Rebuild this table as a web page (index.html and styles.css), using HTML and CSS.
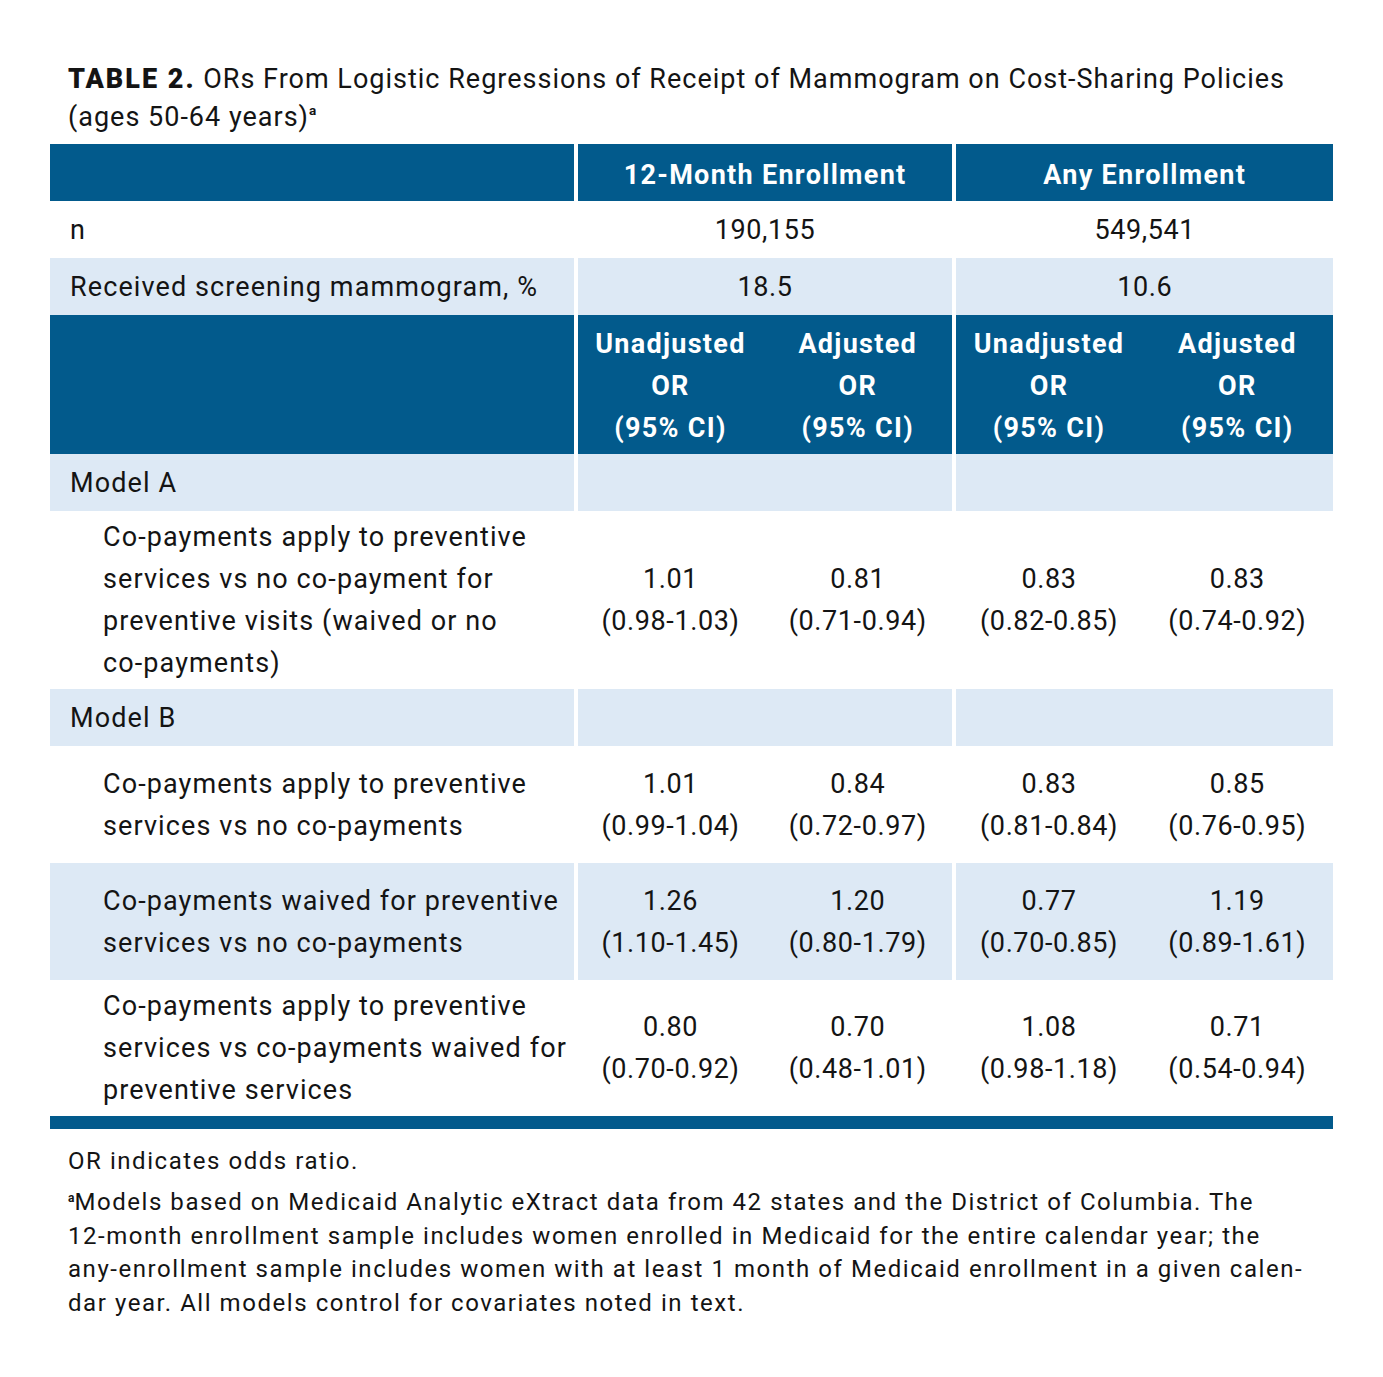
FILE: index.html
```html
<!DOCTYPE html>
<html>
<head>
<meta charset="utf-8">
<link rel="stylesheet" href="styles.css">
</head>
<body>
<div class="page">
  <h1 class="title"><b>TABLE 2.</b> ORs From Logistic Regressions of Receipt of Mammogram on Cost-Sharing Policies<br>(ages 50-64 years)<sup>a</sup></h1>
  <table class="tbl">
    <colgroup>
      <col class="c-label">
      <col class="c-data"><col class="c-data">
      <col class="c-data"><col class="c-data2">
    </colgroup>
    <tr class="hdr h1">
      <td></td>
      <td class="g" colspan="2">12-Month Enrollment</td>
      <td class="g" colspan="2">Any Enrollment</td>
    </tr>
    <tr class="single">
      <td class="lbl">n</td>
      <td class="g" colspan="2">190,155</td>
      <td class="g" colspan="2">549,541</td>
    </tr>
    <tr class="single shade">
      <td class="lbl">Received screening mammogram, %</td>
      <td class="g" colspan="2">18.5</td>
      <td class="g" colspan="2">10.6</td>
    </tr>
    <tr class="hdr h2">
      <td></td>
      <td class="g">Unadjusted<br>OR<br>(95% CI)</td>
      <td>Adjusted<br>OR<br>(95% CI)</td>
      <td class="g">Unadjusted<br>OR<br>(95% CI)</td>
      <td>Adjusted<br>OR<br>(95% CI)</td>
    </tr>
    <tr class="single shade">
      <td class="lbl">Model A</td>
      <td class="g" colspan="2"></td>
      <td class="g" colspan="2"></td>
    </tr>
    <tr class="multi">
      <td class="lbl ind">Co-payments apply to preventive<br>services vs no co-payment for<br>preventive visits (waived or no<br>co-payments)</td>
      <td class="g">1.01<br>(0.98-1.03)</td>
      <td>0.81<br>(0.71-0.94)</td>
      <td class="g">0.83<br>(0.82-0.85)</td>
      <td>0.83<br>(0.74-0.92)</td>
    </tr>
    <tr class="single shade">
      <td class="lbl">Model B</td>
      <td class="g" colspan="2"></td>
      <td class="g" colspan="2"></td>
    </tr>
    <tr class="multi two">
      <td class="lbl ind">Co-payments apply to preventive<br>services vs no co-payments</td>
      <td class="g">1.01<br>(0.99-1.04)</td>
      <td>0.84<br>(0.72-0.97)</td>
      <td class="g">0.83<br>(0.81-0.84)</td>
      <td>0.85<br>(0.76-0.95)</td>
    </tr>
    <tr class="multi two shade">
      <td class="lbl ind">Co-payments waived for preventive<br>services vs no co-payments</td>
      <td class="g">1.26<br>(1.10-1.45)</td>
      <td>1.20<br>(0.80-1.79)</td>
      <td class="g">0.77<br>(0.70-0.85)</td>
      <td>1.19<br>(0.89-1.61)</td>
    </tr>
    <tr class="multi last">
      <td class="lbl ind">Co-payments apply to preventive<br>services vs co-payments waived for<br>preventive services</td>
      <td class="g">0.80<br>(0.70-0.92)</td>
      <td>0.70<br>(0.48-1.01)</td>
      <td class="g">1.08<br>(0.98-1.18)</td>
      <td>0.71<br>(0.54-0.94)</td>
    </tr>
  </table>
  <div class="bar"></div>
  <div class="notes">
    <p>OR indicates odds ratio.</p>
    <p><sup>a</sup>Models based on Medicaid Analytic eXtract data from 42 states and the District of Columbia. The<br>12-month enrollment sample includes women enrolled in Medicaid for the entire calendar year; the<br>any-enrollment sample includes women with at least 1 month of Medicaid enrollment in a given calen-<br>dar year. All models control for covariates noted in text.</p>
  </div>
</div>
</body>
</html>
```
FILE: styles.css
```css
html, body {
  margin: 0;
  padding: 0;
  background: #fff;
}
.page {
  width: 1283px;
  padding: 60px 0 0 50px;
  font-family: Roboto, "Liberation Sans", sans-serif;
  color: #141414;
}
.title {
  margin: 0 0 8px 18px;
  font-size: 27px;
  font-weight: 400;
  line-height: 38px;
  letter-spacing: 1px;
  white-space: nowrap;
}
.title b {
  font-weight: 900;
  letter-spacing: 2px;
}
.title sup, .notes sup {
  font-size: 0.5em;
  font-weight: 700;
  vertical-align: top;
  line-height: 1;
  position: relative;
  top: 6px;
  letter-spacing: 0;
}
.tbl {
  width: 1283px;
  border-collapse: separate;
  border-spacing: 0;
  table-layout: fixed;
  font-size: 27px;
  letter-spacing: 0.6px;
}
.c-label { width: 523px; }
.c-data { width: 189px; }
.c-data2 { width: 191px; }
.tbl td {
  padding: 5px 0;
  text-align: center;
  vertical-align: middle;
  line-height: 42px;
}
.tbl td.g {
  border-left: 4px solid #fff;
}
.tbl td.lbl {
  text-align: left;
  padding-left: 20px;
  letter-spacing: 1.1px;
  white-space: nowrap;
}
.tbl td.ind {
  padding-left: 53px;
  padding-right: 0;
}
.hdr td {
  background: #025a8c;
  color: #fff;
  font-weight: 700;
  letter-spacing: 1.3px;
}
.h1 td { height: 47px; padding-top: 7px; padding-bottom: 3px; }
.h2 td { height: 129px; padding-top: 6px; padding-bottom: 4px; }
.single td { height: 47px; }
.two td { height: 107px; }
.shade td { background: #dde9f5; }
.bar {
  height: 13px;
  background: #025a8c;
}
.notes {
  padding: 16px 0 0 18px;
  font-size: 24px;
  line-height: 33.4px;
  letter-spacing: 1.55px;
}
.notes p {
  margin: 0 0 8px 0;
  white-space: nowrap;
}
```
